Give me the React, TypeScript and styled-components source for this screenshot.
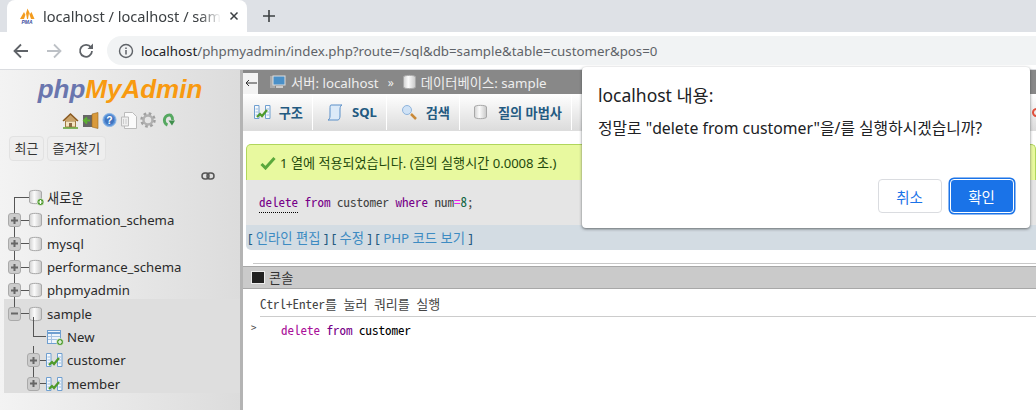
import React from 'react';
import styled, { createGlobalStyle } from 'styled-components';

const Global = createGlobalStyle`
  html, body { margin: 0; padding: 0; background: #fff; }
  body { width: 1036px; height: 410px; overflow: hidden; font-family: "Noto Sans", "Noto Sans CJK KR", sans-serif; }
  * { box-sizing: border-box; }
`;

const mono = '"Noto Sans Mono CJK KR", "Liberation Mono", "Noto Sans CJK KR", monospace';

const Shell = styled.div`
  position: relative;
  width: 1036px;
  height: 410px;
  display: flex;
  flex-direction: column;
  overflow: hidden;
`;

const TabStrip = styled.div`
  height: 32px;
  background: #dee1e6;
  display: flex;
  align-items: flex-end;
  padding-left: 7px;
  flex: none;
`;

const Tab = styled.div`
  width: 240px;
  height: 32px;
  background: #fff;
  border-radius: 8px 8px 0 0;
  display: flex;
  align-items: center;
  padding: 0 12px 0 12px;
  gap: 8px;
  color: #3c4043;
`;

const TabTitle = styled.span`
  flex: 1;
  white-space: nowrap;
  font-size: 14.6px;
  mask-image: linear-gradient(to right, #000 88%, transparent);
`;

const NewTab = styled.div`
  margin-left: 16px;
  height: 32px;
  display: flex;
  align-items: center;
  color: #3c4043;
`;

const Toolbar = styled.div`
  height: 38px;
  background: #fff;
  display: flex;
  align-items: center;
  padding-left: 8px;
  gap: 6.5px;
  flex: none;
  border-bottom: 1px solid #dadce0;
`;

const NavBtn = styled.div`
  width: 20px;
  height: 20px;
  display: flex;
  align-items: center;
  justify-content: center;
  margin: 0 3px;
`;

const Omnibox = styled.div`
  flex: 1;
  height: 29px;
  margin-left: 1.5px;
  border-radius: 15px 0 0 15px;
  background: #f1f3f4;
  display: flex;
  align-items: center;
  padding-left: 11px;
  gap: 7px;
  font-size: 13.3px;
  color: #5f6368;
`;

const Host = styled.span`
  color: #202124;
`;

const Page = styled.div`
  flex: 1;
  display: flex;
  min-height: 0;
`;

const Sidebar = styled.div`
  width: 240px;
  flex: none;
  background: linear-gradient(to right, #f3f3f3, #dcdcdc);
  display: flex;
  flex-direction: column;
  color: #222;
`;

const Logo = styled.div`
  height: 38px;
  padding-top: 1px;
  text-align: center;
  font-family: "Liberation Sans", sans-serif;
  font-weight: 700;
  font-style: italic;
  font-size: 26px;
  line-height: 36px;
  color: #f89a10;
  span { color: #6a76ae; }
`;

const IconRow = styled.div`
  height: 24px;
  display: flex;
  justify-content: center;
  align-items: center;
  gap: 3px;
  padding-right: 4px;
`;

const RecentRow = styled.div`
  display: flex;
  gap: 3px;
  padding: 4px 0 0 9px;
`;

const RecentBtn = styled.div`
  height: 25px;
  padding: 0 4.500px;
  border: 1px solid #e2e2e2;
  border-radius: 4px;
  background: #eeeeee;
  font-size: 13px;
  line-height: 23px;
  color: #333;
`;

const LinkRow = styled.div`
  height: 20px;
  display: flex;
  justify-content: flex-end;
  align-items: center;
  padding: 10px 25px 0 0;
`;

const Tree = styled.div`
  margin-top: 2px;
  margin-left: 4px;
  width: 236px;
`;

const Selected = styled.div`
  background: #dedede;
`;

const Row = styled.div<{ $indent?: boolean }>`
  position: relative;
  height: 23.3px;
  display: flex;
  align-items: center;
  padding: 5px 0 0 ${(p) => (p.$indent ? 23 : 4)}px;
  white-space: nowrap;
`;

const Expander = styled.div`
  width: 13px;
  height: 14px;
  border: 1px solid #aaa;
  border-radius: 3px;
  background: #ccc;
  flex: none;
  display: flex;
  align-items: center;
  justify-content: center;
  z-index: 1;
`;

const Connector = styled.div<{ $w?: number; $ml?: number }>`
  width: ${(p) => p.$w ?? 8}px;
  margin-left: ${(p) => p.$ml ?? 0}px;
  height: 1px;
  background: #555;
  flex: none;
`;

const Label = styled.span`
  margin-left: 4px;
  font-size: 13.2px;
  color: #2a2a2a;
`;

const TreeLine = styled.div<{ $top: number; $left: number; $h: number }>`
  position: absolute;
  top: ${(p) => p.$top}px;
  left: ${(p) => p.$left}px;
  height: ${(p) => p.$h}px;
  width: 1px;
  background: #555;
`;

const Gutter = styled.div`
  width: 3px;
  background: #b4b4b4;
  flex: none;
`;

const Main = styled.div`
  flex: 1;
  min-width: 0;
  display: flex;
  flex-direction: column;
`;

const TopBar = styled.div`
  height: 24px;
  background: #888;
  display: flex;
  align-items: center;
  color: #eee;
  font-size: 13.3px;
  flex: none;
`;

const BackBox = styled.div`
  width: 15px;
  height: 21px;
  margin-top: 2px;
  background: #f3f3f3;
  display: flex;
  align-items: center;
  justify-content: center;
  margin-right: 13px;
`;

const Crumb = styled.span`
  margin-left: 4px;
`;

const Sep = styled.span`
  margin: 0 9px;
  font-size: 12px;
`;

const TabsBar = styled.div`
  height: 37px;
  background: linear-gradient(#fff, #dcdcdc);
  display: flex;
  align-items: stretch;
  border-bottom: 1px solid #ddd;
  flex: none;
`;

const MenuTab = styled.div<{ $w: number; $first?: boolean }>`
  width: ${(p) => p.$w}px;
  border-right: 1px solid #fff;
  display: flex;
  align-items: center;
  justify-content: space-between;
  padding: 0 9px 0 ${(p) => (p.$first ? 11 : 14)}px;
  font-size: 13.2px;
  font-weight: 700;
  color: #235a81;
`;

const ClippedIcon = styled.div`
  margin: auto -5px auto auto;
  width: 9px;
  height: 9px;
  border-radius: 50%;
  border: 2px solid #e0503c;
`;

const Content = styled.div`
  flex: 1;
  padding: 13px 0 0 3px;
  display: flex;
  flex-direction: column;
  min-height: 0;
`;

const Success = styled.div`
  height: 36px;
  flex: none;
  background: #e8f99f;
  border: 1px solid #b0d65c;
  border-radius: 5px 5px 0 0;
  border-bottom: 0;
  display: flex;
  align-items: center;
  padding-left: 13px;
  gap: 4px;
  font-size: 13.1px;
  color: #1f4a0c;
`;

const SqlBox = styled.div`
  height: 45px;
  flex: none;
  background: #e5e5e5;
  padding: 13px 0 0 13px;
  font-family: ${mono};
  font-size: 13px;
  line-height: 18px;
  color: #444;
`;

const Kw = styled.span<{ $c?: string; $dotted?: boolean }>`
  color: ${(p) => p.$c || '#770088'};
  ${(p) => (p.$dotted ? 'border-bottom: 1px dotted #000; padding-bottom: 1px;' : '')}
`;

const LinksBar = styled.div`
  height: 25px;
  flex: none;
  background: #d3dce3;
  border-radius: 0 0 0 5px;
  padding-left: 2px;
  font-size: 13.3px;
  line-height: 26px;
  color: #235a81;
  a { color: #3d8bc2; text-decoration: none; }
`;

const Rule = styled.div`
  height: 1px;
  background: #c8c8c8;
  margin: 13px 0 0 7px;
  flex: none;
`;

const ConsoleBar = styled.div`
  height: 23px;
  background: #cacaca;
  border-top: 1px solid #a8a8a8;
  border-bottom: 1px solid #a8a8a8;
  margin: 2px 0 0 -3px;
  display: flex;
  align-items: center;
  gap: 4px;
  padding-left: 8px;
  font-size: 13.2px;
  color: #333;
  flex: none;
`;

const ConsoleHint = styled.div`
  height: 28px;
  flex: none;
  margin-left: 14px;
  border-bottom: 1px solid #ccc;
  font-family: ${mono};
  font-size: 13px;
  line-height: 30px;
  color: #444;
`;

const Prompt = styled.div`
  display: flex;
  margin: 3px 0 0 5px;
  font-family: ${mono};
  font-size: 13px;
  line-height: 20px;
  color: #000;
`;

const PromptMark = styled.span`
  width: 30px;
  color: #444;
  font-size: 11px;
  line-height: 15px;
`;

const Dialog = styled.div`
  position: absolute;
  left: 582px;
  top: 67px;
  width: 448px;
  height: 161px;
  background: #fff;
  border-radius: 4px;
  box-shadow: 0 1px 3px rgba(60, 64, 67, 0.75);
  padding: 16px 16px 0;
  color: #202124;
`;

const DialogTitle = styled.div`
  font-size: 17.5px;
  line-height: 24px;
`;

const DialogMsg = styled.div`
  margin-top: 10px;
  font-size: 15.800px;
  line-height: 22px;
  white-space: nowrap;
`;

const DialogActions = styled.div`
  position: absolute;
  right: 16.5px;
  bottom: 15px;
  display: flex;
  gap: 8px;
`;

const DialogBtn = styled.div<{ $primary?: boolean }>`
  height: 34px;
  width: 64px;
  border-radius: 4px;
  display: flex;
  align-items: center;
  justify-content: center;
  font-size: 14.5px;
  background: ${(p) => (p.$primary ? '#1a73e8' : '#fff')};
  color: ${(p) => (p.$primary ? '#fff' : '#1a73e8')};
  border: 1px solid ${(p) => (p.$primary ? '#fff' : '#dadce0')};
  ${(p) => (p.$primary ? 'box-shadow: 0 0 0 1.500px #1a73e8;' : '')}
`;

const PlusBadge = ({ cx, cy }: { cx: number; cy: number }) => (
  <>
    <circle cx={cx} cy={cy} r="3.500" fill="#4f9a2e" stroke="#fff" strokeWidth="0.6" />
    <path d={`M${cx - 2} ${cy}h4M${cx} ${cy - 2}v4`} stroke="#fff" strokeWidth="1.2" />
  </>
);

const DbIcon = ({ plus }: { plus?: boolean }) => (
  <svg width="14" height="16" viewBox="0 0 14 16" style={{ flex: 'none', overflow: 'visible' }}>
    <defs>
      <linearGradient id="dbg" x1="0" x2="1" y1="0" y2="0">
        <stop offset="0" stopColor="#d0d0d0" />
        <stop offset="0.4" stopColor="#fbfbfb" />
        <stop offset="1" stopColor="#c8c8c8" />
      </linearGradient>
    </defs>
    <path d="M.5 3 C.5 .8 12.500 .8 12.500 3 V13 C12.500 15.200 .5 15.200 .5 13 Z" fill="url(#dbg)" stroke="#a8a8a8" />
    {plus && <PlusBadge cx={11.5} cy={13} />}
  </svg>
);

const ExpandIcon = ({ minus }: { minus?: boolean }) => (
  <Expander>
    <svg width="9" height="9" viewBox="0 0 9 9">
      <path d={minus ? 'M1 4.500h7' : 'M1 4.500h7M4.500 1v7'} stroke="#666" strokeWidth="2" />
    </svg>
  </Expander>
);

const TableIcon = () => (
  <svg width="17" height="16" viewBox="0 0 17 16" style={{ flex: 'none' }}>
    <path d="M.5 1.500h4.500v13H.5zM11.500 1.500h4.500v13h-4.500z" fill="#f4f8fc" stroke="#6f9fd0" />
    <path d="M1.500 5h2.500M1.500 8h2.500M1.500 11h2.500M12.500 5h2.500M12.500 8h2.500M12.500 11h2.500" stroke="#9cbde0" />
    <path d="M3 13 L6 10 L8 12 L13 6" fill="none" stroke="#4e9a2a" strokeWidth="2.200" />
  </svg>
);

const NewTableIcon = () => (
  <svg width="17" height="16" viewBox="0 0 17 16" style={{ flex: 'none', overflow: 'visible' }}>
    <rect x="1.500" y="1.500" width="13" height="13" fill="#eef4fb" stroke="#6f9fd0" />
    <path d="M1.500 4h13" stroke="#6f9fd0" strokeWidth="2" />
    <path d="M2 7.500h12M2 10.500h12M5.500 5v9" stroke="#a5c2e2" />
    <PlusBadge cx={14} cy={13} />
  </svg>
);

const dbs = ['information_schema', 'mysql', 'performance_schema', 'phpmyadmin'];

export default function App() {
  return (
    <Shell>
      <Global />
      <TabStrip>
        <Tab>
          <svg width="16" height="16" viewBox="0 0 16 16" style={{ flex: 'none' }}>
            <path d="M1 11 L5 4 L6.500 7 L8.500 .5 L11 6 L12.500 4 L15.500 11 Z" fill="#f39c1f" />
            <path d="M5 11 L7 5 L8 11ZM9 11 L10 5 L12 11Z" fill="#fff" />
            <text x="8" y="15.500" fontSize="5" fontWeight="700" fontStyle="italic" textAnchor="middle" fill="#3d4f9e" fontFamily="Liberation Sans">PMA</text>
          </svg>
          <TabTitle>localhost / localhost / sam</TabTitle>
          <svg width="10" height="10" viewBox="0 0 10 10" style={{ flex: 'none' }}>
            <path d="M1.500 1.500l7 7M8.500 1.500l-7 7" stroke="#3c4043" strokeWidth="1.500" />
          </svg>
        </Tab>
        <NewTab>
          <svg width="12" height="12" viewBox="0 0 12 12">
            <path d="M6 0v12M0 6h12" stroke="#3c4043" strokeWidth="1.600" />
          </svg>
        </NewTab>
      </TabStrip>
      <Toolbar>
        <NavBtn>
          <svg width="16" height="16" viewBox="0 0 16 16">
            <path d="M15 8H2M8 1.500L1.500 8 8 14.500" fill="none" stroke="#5f6368" strokeWidth="1.800" />
          </svg>
        </NavBtn>
        <NavBtn>
          <svg width="16" height="16" viewBox="0 0 16 16">
            <path d="M1 8h13M8 1.500L14.500 8 8 14.500" fill="none" stroke="#bdc1c6" strokeWidth="1.800" />
          </svg>
        </NavBtn>
        <NavBtn>
          <svg width="16" height="16" viewBox="0 0 16 16">
            <path d="M13 4.500A6 6 0 1 0 14 8" fill="none" stroke="#5f6368" strokeWidth="1.800" />
            <path d="M9.500 6H15V.5z" fill="#5f6368" />
          </svg>
        </NavBtn>
        <Omnibox>
          <svg width="16" height="16" viewBox="0 0 16 16" style={{ flex: 'none' }}>
            <circle cx="8" cy="8" r="6.500" fill="none" stroke="#5f6368" strokeWidth="1.400" />
            <path d="M8 7v4.500M8 4.500v1.500" stroke="#5f6368" strokeWidth="1.500" />
          </svg>
          <span>
            <Host>localhost</Host>/phpmyadmin/index.php?route=/sql&amp;db=sample&amp;table=customer&amp;pos=0
          </span>
        </Omnibox>
      </Toolbar>
      <Page>
        <Sidebar>
          <Logo>
            <span>php</span>MyAdmin
          </Logo>
          <IconRow>
            <svg width="17" height="17" viewBox="0 0 17 17">
              <path d="M3.500 9h10v6h-10z" fill="#f3e3c0" stroke="#a07a42" />
              <path d="M1 9L8.500 2 16 9" fill="#c9a36a" stroke="#8a5a22" strokeWidth="1.500" />
              <path d="M7 11h3v4H7z" fill="#8a6a42" />
              <path d="M1 16h15" stroke="#5da030" strokeWidth="1.500" />
            </svg>
            <svg width="17" height="17" viewBox="0 0 17 17">
              <path d="M1 3h10v12H1z" fill="#666" />
              <path d="M10 2l6-1.500v16l-6-1.500z" fill="#d99a3c" stroke="#9a6a20" strokeWidth="0.600" />
              <path d="M2 8.500h6M5 5.500L2 8.500l3 3" fill="none" stroke="#5bb030" strokeWidth="2" />
            </svg>
            <svg width="15" height="16" viewBox="0 0 16 16">
              <circle cx="8" cy="8" r="7" fill="#5b93d8" stroke="#8cb6e6" />
              <circle cx="8" cy="8" r="5" fill="#3f74c0" />
              <text x="8" y="12" fontSize="11" fontWeight="700" textAnchor="middle" fill="#fff" fontFamily="Liberation Sans">?</text>
            </svg>
            <svg width="17" height="17" viewBox="0 0 17 17">
              <path d="M4.500 .5h8l4 4v12h-12z" fill="#fafafa" stroke="#bbb" />
              <path d="M1.500 5h7v9h-7z" fill="#eee" stroke="#bbb" />
              <path d="M3.500 7v5M6 7v5" stroke="#ccc" />
            </svg>
            <svg width="16" height="16" viewBox="0 0 16 16">
              <circle cx="8" cy="8" r="6" fill="none" stroke="#a0a0a0" strokeWidth="3.500" strokeDasharray="2.400 2.300" />
              <circle cx="8" cy="8" r="4.500" fill="none" stroke="#b0b0b0" strokeWidth="2.500" />
            </svg>
            <svg width="14" height="16" viewBox="0 0 14 16" style={{ marginLeft: 2 }}>
              <path d="M10.500 3.500A5 5 0 1 0 6.500 13" fill="none" stroke="#55a860" strokeWidth="3" />
              <path d="M10 3.500A5 5 0 0 1 11.500 8" fill="none" stroke="#55a860" strokeWidth="3" />
              <path d="M7.500 8.500h6.500l-3 5z" fill="#3f8f4c" />
            </svg>
          </IconRow>
          <RecentRow>
            <RecentBtn>최근</RecentBtn>
            <RecentBtn>즐겨찾기</RecentBtn>
          </RecentRow>
          <LinkRow>
            <svg width="14" height="8" viewBox="0 0 14 8">
              <rect x="1" y="1" width="7" height="6" rx="3" fill="none" stroke="#555" strokeWidth="1.500" />
              <rect x="6" y="1" width="7" height="6" rx="3" fill="none" stroke="#555" strokeWidth="1.500" />
            </svg>
          </LinkRow>
          <Tree>
            <Row>
              <TreeLine $top={14} $left={10} $h={10} />
              <Connector $ml={6} $w={15} />
              <DbIcon plus />
              <Label>새로운</Label>
            </Row>
            {dbs.map((db) => (
              <Row key={db}>
                <TreeLine $top={0} $left={10} $h={24} />
                <ExpandIcon />
                <Connector />
                <DbIcon />
                <Label>{db}</Label>
              </Row>
            ))}
            <Selected>
              <Row>
                <TreeLine $top={0} $left={10} $h={8} />
                <TreeLine $top={18} $left={29} $h={6} />
                <ExpandIcon minus />
                <Connector />
                <DbIcon />
                <Label>sample</Label>
              </Row>
              <Row $indent>
                <TreeLine $top={0} $left={29} $h={14} />
                <Connector $ml={6} $w={13} />
                <NewTableIcon />
                <Label>New</Label>
              </Row>
              <Row $indent>
                <TreeLine $top={0} $left={29} $h={24} />
                <ExpandIcon />
                <Connector $w={6} />
                <TableIcon />
                <Label>customer</Label>
              </Row>
              <Row $indent>
                <TreeLine $top={0} $left={29} $h={8} />
                <ExpandIcon />
                <Connector $w={6} />
                <TableIcon />
                <Label>member</Label>
              </Row>
            </Selected>
          </Tree>
        </Sidebar>
        <Gutter />
        <Main>
          <TopBar>
            <BackBox>
              <svg width="12" height="8" viewBox="0 0 12 8">
                <path d="M12 4H1M4 1L1 4l3 3" fill="none" stroke="#333" />
              </svg>
            </BackBox>
            <svg width="16" height="14" viewBox="0 0 16 14" style={{ marginLeft: -1, marginRight: 1 }}>
              <rect x="0" y="1" width="5" height="12" fill="#aaa" />
              <rect x="3" y="1" width="12" height="9" fill="#4a90c8" stroke="#ddd" />
              <rect x="6" y="11" width="7" height="2" fill="#ccc" />
            </svg>
            <Crumb>서버: localhost</Crumb>
            <Sep>»</Sep>
            <DbIcon />
            <Crumb>데이터베이스: sample</Crumb>
          </TopBar>
          <TabsBar>
            <MenuTab $w={70} $first>
              <TableIcon />
              구조
            </MenuTab>
            <MenuTab $w={74}>
              <svg width="16" height="17" viewBox="0 0 16 17">
                <path d="M4 1h11c-1 0-2 2-2 4v7c0 2-1 4-2 4H1c1 0 2-2 2-4V5c0-2 0-4 1-4z" fill="#dceaf8" stroke="#5a8fc8" />
              </svg>
              SQL
            </MenuTab>
            <MenuTab $w={73}>
              <svg width="16" height="16" viewBox="0 0 16 16">
                <circle cx="6" cy="6" r="4.500" fill="#cfe2f6" stroke="#8fb4dc" />
                <path d="M10 10l5 5" stroke="#c98a3a" strokeWidth="2.500" />
              </svg>
              검색
            </MenuTab>
            <MenuTab $w={112}>
              <DbIcon />
              질의 마법사
            </MenuTab>
            <ClippedIcon />
          </TabsBar>
          <Content>
            <Success>
              <svg width="16" height="14" viewBox="0 0 16 14">
                <path d="M1.500 8l4 4L14.500 2" fill="none" stroke="#5aa83c" strokeWidth="3" />
              </svg>
              1 열에 적용되었습니다. (질의 실행시간 0.0008 초.)
            </Success>
            <SqlBox>
              <Kw $dotted>delete</Kw> <Kw>from</Kw> customer <Kw>where</Kw> num<Kw $c="#ee22ee">=</Kw>
              <Kw $c="#116644">8</Kw>;
            </SqlBox>
            <LinksBar>
              [ <a>인라인 편집</a> ] [ <a>수정</a> ] [ <a>PHP 코드 보기</a> ]
            </LinksBar>
            <Rule />
            <ConsoleBar>
              <svg width="14" height="13" viewBox="0 0 14 13">
                <rect x="0.500" y="0.500" width="13" height="12" fill="#222" stroke="#eee" />
              </svg>
              콘솔
            </ConsoleBar>
            <ConsoleHint>Ctrl+Enter를 눌러 쿼리를 실행</ConsoleHint>
            <Prompt>
              <PromptMark>&gt;</PromptMark>
              <span>
                <Kw $c="#aa1199">delete</Kw> <Kw>from</Kw> customer
              </span>
            </Prompt>
          </Content>
        </Main>
      </Page>
      <Dialog>
        <DialogTitle>localhost 내용:</DialogTitle>
        <DialogMsg>정말로 "delete from customer"을/를 실행하시겠습니까?</DialogMsg>
        <DialogActions>
          <DialogBtn>취소</DialogBtn>
          <DialogBtn $primary>확인</DialogBtn>
        </DialogActions>
      </Dialog>
    </Shell>
  );
}
